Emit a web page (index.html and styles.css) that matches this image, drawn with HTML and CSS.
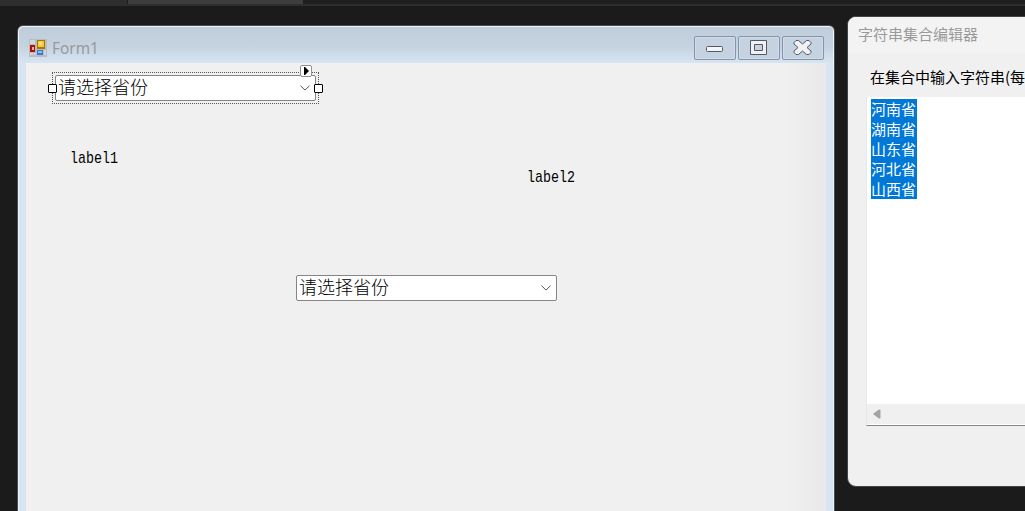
FILE: index.html
```
<!DOCTYPE html>
<html lang="zh-CN">

<head>
    <meta charset="utf-8">
    <title>Form1</title>
    <link rel="stylesheet" href="styles.css">
</head>

<body>
    <div class="desktop">
        <div class="tabstrip">
            <div class="tab first"></div>
            <div class="tab active"></div>
        </div>

        <div class="form-window">
            <div class="titlebar">
                <svg class="form-icon" width="18" height="18" viewBox="0 0 18 18">
                    <rect width="18" height="18" fill="#bcbcbe" />
                    <path d="M1 1h5v4h-5zM1 14h3v2h-3zM5 14h2v2h-2zM15 11h2v5h-2z" fill="#cbd8e4" />
                    <rect x="1" y="6" width="5" height="7" fill="#a81508" />
                    <rect x="3" y="8" width="2" height="3" fill="#f2aaa0" />
                    <rect x="8" y="1" width="8" height="9" fill="#a87900" />
                    <rect x="9" y="2" width="6" height="6" fill="#fbc834" />
                    <rect x="10" y="3" width="3" height="3" fill="#ffe78d" />
                    <rect x="8" y="11" width="6" height="5" fill="#3978d8" />
                    <rect x="9" y="12" width="4" height="2" fill="#8dbbff" />
                </svg>
                <span class="title">Form1</span>
                <div class="window-buttons">
                    <div class="window-button">
                        <svg width="40" height="22" viewBox="0 0 40 22">
                            <rect x="11.5" y="9.5" width="16" height="5" rx="1" fill="#f5f5f5" stroke="#54566b" />
                        </svg>
                    </div>
                    <div class="window-button">
                        <svg width="40" height="22" viewBox="0 0 40 22">
                            <path d="M11.5 3.5h16v14h-16zM15.5 7.5v6h8v-6z" fill="#f1f1f1" fill-rule="evenodd" stroke="#54566b" stroke-linejoin="round" />
                        </svg>
                    </div>
                    <div class="window-button">
                        <svg width="40" height="22" viewBox="0 0 40 22">
                            <path d="M13 3.500h2.500l4 3.500 4-3.500h2.500l2 2v1.500l-4 3.500 4 3.500v1.500l-2 2h-2.500l-4-3.500-4 3.500h-2.500l-2-2v-1.500l4-3.500-4-3.500v-1.500z" fill="#f1f1f1" stroke="#54566b" stroke-linejoin="round" />
                        </svg>
                    </div>
                </div>
            </div>
            <div class="form-body">
                <div class="combo combo1">
                    <span>请选择省份</span>
                    <svg width="10" height="6" viewBox="0 0 10 6"><path d="M.5 .7L5 5.1 9.500 .7" /></svg>
                </div>
                <div class="selection">
                    <div class="handle left"></div>
                    <div class="handle right"></div>
                    <div class="smart-tag">
                        <svg width="10" height="10" viewBox="0 0 10 10"><path d="M3 1h1l4 4-4 4h-1z" /></svg>
                    </div>
                </div>
                <div class="label label1">label1</div>
                <div class="label label2">label2</div>
                <div class="combo combo2">
                    <span>请选择省份</span>
                    <svg width="10" height="6" viewBox="0 0 10 6"><path d="M.5 .7L5 5.1 9.500 .7" /></svg>
                </div>
            </div>
        </div>

        <div class="dialog">
            <div class="dialog-title">字符串集合编辑器</div>
            <div class="dialog-body">
                <div class="hint">在集合中输入字符串(每</div>
                <div class="editor">
                    <div class="lines">
                        <div>河南省</div>
                        <div>湖南省</div>
                        <div>山东省</div>
                        <div>河北省</div>
                        <div>山西省</div>
                    </div>
                    <div class="scrollbar">
                        <svg width="8" height="10" viewBox="0 0 8 10"><path d="M0 5L5.500 .8Q7.500-.2 7.500 1.500v7Q7.500 10.200 5.500 9.200z" /></svg>
                    </div>
                </div>
            </div>
        </div>
    </div>
</body>

</html>
```
FILE: styles.css
```
body {
    margin: 0;
}

.desktop {
    position: relative;
    width: 1025px;
    height: 511px;
    overflow: hidden;
    background-color: #1b1b1b;
    font-family: "Noto Sans", "Noto Sans CJK SC", sans-serif;
}

.tabstrip {
    display: flex;
    height: 4px;
    background-color: #1f1f1f;
    border-bottom: 2px solid #2e2e2e;
}

.tab.first {
    width: 127px;
    background-color: #2e2e2e;
    border-right: 1px solid #1b1b1b;
}

.tab.active {
    width: 175px;
    background-color: #3d3d3d;
}

.form-window {
    position: absolute;
    left: 17px;
    top: 25px;
    box-sizing: border-box;
    width: 818px;
    height: 500px;
    padding: 0 7px;
    border: 1px solid #4c4c50;
    border-radius: 6px 6px 0 0;
    background: linear-gradient(#bfcddb, #c5d3e1 20px, #d7e4f2 37px);
    box-shadow: inset 1px 1px #edf3f9, inset -1px 0 #edf3f9;
}

.titlebar {
    display: flex;
    height: 37px;
}

.form-icon {
    margin: 13px 0 0 4px;
}

.title {
    margin: 12px 0 0 5px;
    font-size: 15.4px;
    line-height: 21px;
    color: #999;
}

.window-buttons {
    display: flex;
    gap: 2px;
    margin: 10px 3px 0 auto;
}

.window-button {
    box-sizing: border-box;
    width: 42px;
    height: 24px;
    border: 1px solid #8792ac;
    border-radius: 2px;
    background-color: #c5d3e1;
    box-shadow: inset 0 0 0 1px #d0dce8;
}

.window-button svg {
    display: block;
}

/* design surface, controls sit where they were dropped */
.form-body {
    position: relative;
    width: 800px;
    height: 460px;
    margin-left: 1px;
    background: linear-gradient(90deg, #f0f0f0 760px, #e9e9e9);
}

.combo {
    position: absolute;
    display: flex;
    align-items: center;
    justify-content: space-between;
    box-sizing: border-box;
    width: 261px;
    height: 26px;
    padding: 0 5px 0 2px;
    border: 1px solid #858585;
    border-radius: 2px;
    background-color: #fff;
    font-family: "Noto Sans CJK SC", sans-serif;
    font-size: 18px;
    font-weight: 300;
    line-height: 22px;
    color: #000;
}

.combo span {
    margin-top: -5px;
}

.combo svg {
    fill: none;
    stroke: #555;
}

.combo1 {
    left: 29px;
    top: 12px;
}

.combo2 {
    left: 270px;
    top: 212px;
}

.selection {
    position: absolute;
    left: 26px;
    top: 9px;
    box-sizing: border-box;
    width: 267px;
    height: 32px;
    border: 1px dotted #555;
}

.handle {
    position: absolute;
    top: 11px;
    box-sizing: border-box;
    width: 9px;
    height: 9px;
    border: 1px solid #000;
    border-radius: 1px;
    background-color: #fff;
}

.handle.left {
    left: -5px;
}

.handle.right {
    right: -5px;
}

.smart-tag {
    position: absolute;
    right: 6px;
    top: -8px;
    width: 10px;
    height: 10px;
    border: 1px solid #92928c;
    border-radius: 2px;
    background-color: #fff;
}

.smart-tag svg {
    display: block;
}

.label {
    position: absolute;
    font-family: "Liberation Mono", monospace;
    font-size: 13.33px;
    line-height: 16px;
    color: #000;
    transform: scaleY(1.2);
}

.label1 {
    left: 44px;
    top: 88px;
}

.label2 {
    left: 501px;
    top: 107px;
}

.dialog {
    position: absolute;
    left: 847px;
    top: 16px;
    box-sizing: border-box;
    width: 400px;
    height: 471px;
    border: 1px solid #444;
    border-radius: 9px;
    overflow: hidden;
    background-color: #f0f0f0;
    font-family: "Noto Sans CJK SC", sans-serif;
    font-size: 15px;
    white-space: nowrap;
}

.dialog-title {
    height: 37px;
    padding-left: 10px;
    line-height: 33px;
    background-color: #f3f3f3;
    color: #999;
}

.dialog-body {
    padding: 13px 0 0 18px;
}

.hint {
    height: 30px;
    padding-left: 4px;
    line-height: 20px;
    color: #000;
}

.editor {
    display: flex;
    flex-direction: column;
    justify-content: space-between;
    height: 328px;
    border-left: 1px solid #e8e8e8;
    border-bottom: 1px solid #858585;
    background-color: #fff;
}

.lines {
    padding: 2px 0 0 4px;
}

.lines div {
    width: 46px;
    height: 20px;
    line-height: 19px;
    background-color: #0078d7;
    color: #fff;
}

.scrollbar {
    display: flex;
    align-items: center;
    height: 20px;
    padding-left: 6px;
    border-bottom: 1px solid #fff;
    background-color: #f0f0f0;
}

.scrollbar svg {
    fill: #a3a3a3;
}
```
